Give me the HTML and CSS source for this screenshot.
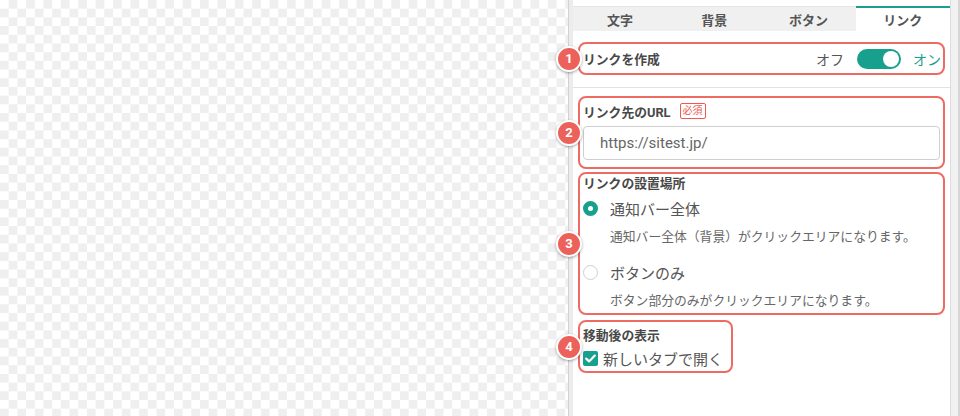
FILE: index.html
```html
<!DOCTYPE html>
<html lang="ja">
<head>
<meta charset="utf-8">
<link rel="stylesheet" href="styles.css">
</head>
<body>
<div class="app">
  <div class="canvas"></div>
  <div class="panel">
    <div class="tabs">
      <div class="tab">文字</div>
      <div class="tab">背景</div>
      <div class="tab">ボタン</div>
      <div class="tab active">リンク</div>
    </div>

    <div class="box box1">
      <span class="marker">1</span>
      <span class="label">リンクを作成</span>
      <div class="switch-group">
        <span class="off">オフ</span>
        <span class="toggle"><span class="knob"></span></span>
        <span class="on">オン</span>
      </div>
    </div>

    <div class="sep"></div>

    <div class="box box2">
      <span class="marker">2</span>
      <div class="label-row"><span class="label">リンク先のURL</span><span class="req">必須</span></div>
      <div class="input">https://sitest.jp/</div>
    </div>

    <div class="box box3">
      <span class="marker">3</span>
      <div class="label">リンクの設置場所</div>
      <div class="opt first"><span class="radio checked"></span><span class="opt-text">通知バー全体</span></div>
      <div class="desc">通知バー全体（背景）がクリックエリアになります。</div>
      <div class="opt second"><span class="radio"></span><span class="opt-text">ボタンのみ</span></div>
      <div class="desc">ボタン部分のみがクリックエリアになります。</div>
    </div>

    <div class="box box4">
      <span class="marker">4</span>
      <div class="label">移動後の表示</div>
      <div class="check-row">
        <span class="checkbox"><svg width="11" height="9" viewBox="0 0 11 9"><path d="M1.2 4.6 L4.1 7.4 L9.8 1.6" fill="none" stroke="#fff" stroke-width="2.2" stroke-linecap="round" stroke-linejoin="round"/></svg></span>
        <span class="opt-text">新しいタブで開く</span>
      </div>
    </div>
  </div>
  <div class="scrollbar"></div>
</div>
</body>
</html>
```
FILE: styles.css
```css
* { box-sizing: border-box; }
html, body { margin: 0; padding: 0; }
body {
  width: 960px;
  height: 416px;
  overflow: hidden;
  font-family: Roboto, "Noto Sans CJK JP", sans-serif;
  color: #555;
  background: #fff;
}
.app {
  display: flex;
  height: 416px;
}
.canvas {
  width: 568px;
  flex: none;
  background-color: #fff;
  background-image: repeating-conic-gradient(#efefef 0 25%, #ffffff 0 50%);
  background-size: 17.4px 17.4px;
}
.panel {
  width: 382px;
  flex: none;
  position: relative;
  background: #fff;
  border-left: 1px solid #d2d2d2;
  box-shadow: inset 4px 0 0 #ececec;
  padding-left: 4px;
}
.scrollbar {
  flex: 1;
  background: #f1f1f1;
  border-left: 1px solid #dcdcdc;
  border-right: 2px solid #d6d6d6;
}
.tabs {
  display: flex;
  margin-top: 6px;
  border-top: 1px solid #e6e6e6;
  height: 25px;
}
.tab {
  flex: 1;
  background: #f0f0f0;
  font-size: 13px;
  font-weight: 700;
  color: #555;
  display: flex;
  align-items: center;
  justify-content: center;
  padding-top: 1px;
}
.tab.active {
  background: #fff;
  border-top: 2px solid #1a9e8e;
  margin-top: -1px;
  padding-top: 0;
}
.box {
  position: relative;
  border: 2px solid #ee6b63;
  border-radius: 8px;
  margin: 0 5px;
}
.marker {
  position: absolute;
  left: -24px;
  top: 50%;
  width: 26px;
  height: 26px;
  margin-top: -13px;
  border-radius: 50%;
  background: #ec625a;
  border: 2px solid #fff;
  box-shadow: 0 1px 3px rgba(0,0,0,0.35);
  color: #fff;
  font-size: 13px;
  font-weight: 700;
  display: flex;
  align-items: center;
  justify-content: center;
}
.label {
  font-size: 12.8px;
  font-weight: 700;
  color: #484848;
}
.box1 {
  margin-top: 11px;
  height: 33px;
  display: flex;
  align-items: center;
  justify-content: space-between;
  padding: 0 2px 0 3px;
}
.switch-group {
  display: flex;
  align-items: center;
  font-size: 14px;
}
.off { color: #555; }
.on { color: #1a9e8e; }
.toggle {
  width: 44px;
  height: 20px;
  border-radius: 10px;
  background: #18a08e;
  margin: 0 12px 0 13px;
  position: relative;
  display: flex;
  align-items: center;
  justify-content: flex-end;
  padding-right: 2px;
}
.knob {
  width: 16px;
  height: 16px;
  border-radius: 50%;
  background: #fff;
}
.sep {
  height: 1px;
  background: #e2e2e2;
  margin: 12px 0 8px;
}
.box2 {
  padding: 3px 3px 7px 3px;
}
.label-row {
  display: flex;
  align-items: center;
  height: 20px;
}
.req {
  margin-left: 9px;
  font-size: 10px;
  color: #ee5a52;
  border: 1px solid #ee5a52;
  border-radius: 2px;
  padding: 0 2px;
  line-height: 14px;
}
.input {
  margin-top: 5px;
  height: 34px;
  border: 1px solid #cfcfcf;
  border-radius: 4px;
  font-size: 15px;
  color: #666;
  display: flex;
  align-items: center;
  padding-left: 16px;
}
.box3 {
  margin-top: 3px;
  padding: 1px 3px 2px 3px;
}
.box3 .label { line-height: 18px; }
.opt {
  display: flex;
  align-items: center;
  height: 24px;
}
.opt.first { margin-top: 3px; }
.opt.second { margin-top: 13px; }
.radio {
  width: 15px;
  height: 15px;
  border-radius: 50%;
  border: 1px solid #cfcfcf;
  background: #fff;
  margin-right: 12px;
  flex: none;
}
.radio.checked {
  border: 5px solid #16a08d;
  background: #fff;
}
.opt-text {
  font-size: 15px;
  color: #555;
}
.desc {
  margin-top: 7px;
  line-height: 20px;
  font-size: 12.8px;
  color: #666;
  padding-left: 27px;
}
.box4 {
  margin-top: 5px;
  width: fit-content;
  padding: 5px 8px 1px 3px;
}
.box4 .label { line-height: 18px; }
.check-row {
  display: flex;
  align-items: center;
  height: 24px;
  margin-top: 1px;
}
.checkbox {
  width: 15px;
  height: 15px;
  border-radius: 2px;
  background: #16a08d;
  display: flex;
  align-items: center;
  justify-content: center;
  margin-right: 5px;
  flex: none;
}
```
